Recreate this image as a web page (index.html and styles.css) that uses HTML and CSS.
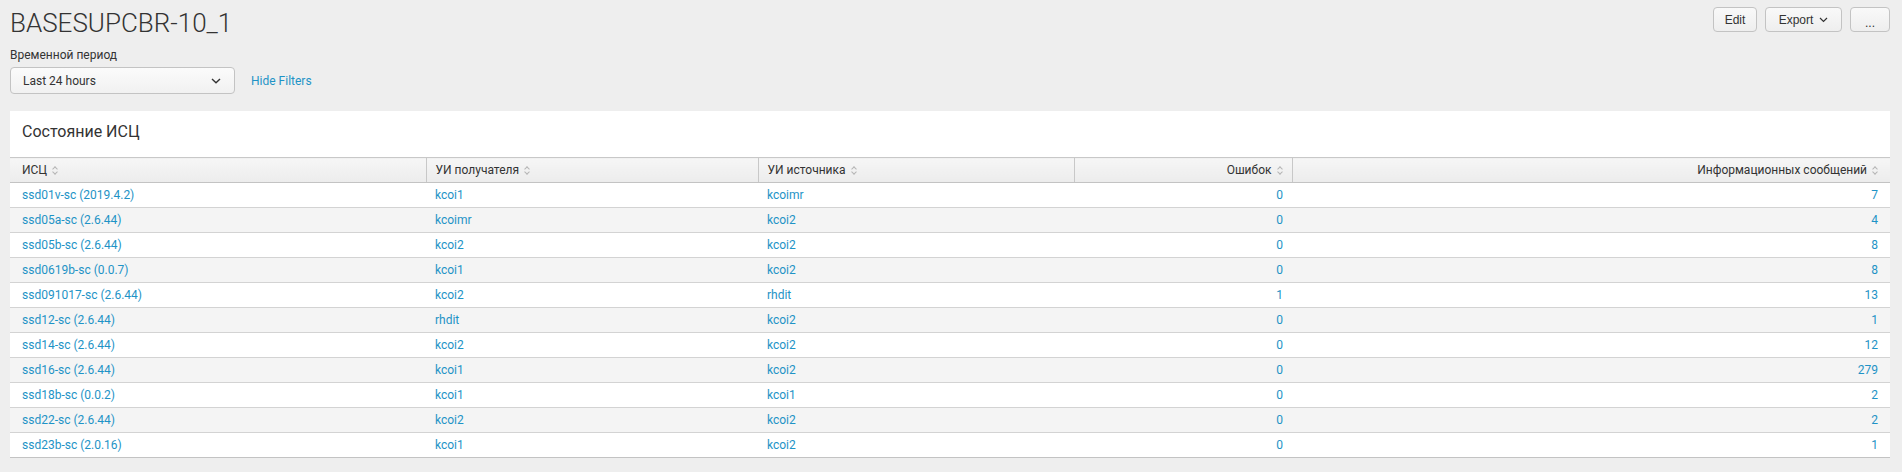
FILE: index.html
```html
<!DOCTYPE html>
<html lang="ru">
<head>
<meta charset="utf-8">
<title>BASESUPCBR-10_1</title>
<link rel="stylesheet" href="styles.css">
</head>
<body>
<header class="top">
  <h1 class="title">BASESUPCBR-10_1</h1>
  <div class="actions">
    <button class="btn btn-edit">Edit</button>
    <button class="btn btn-export">Export <svg class="chev" width="9" height="6" viewBox="0 0 9 6"><path d="M1 1l3.5 3.5L8 1" fill="none" stroke="#333" stroke-width="1.2"/></svg></button>
    <button class="btn btn-more">...</button>
  </div>
</header>
<section class="filters">
  <div class="label">Временной период</div>
  <div class="filter-row">
    <div class="select"><span>Last 24 hours</span><svg width="10" height="6" viewBox="0 0 10 6"><path d="M1 1l4 3.8L9 1" fill="none" stroke="#333" stroke-width="1.4"/></svg></div>
    <a class="hide-link">Hide Filters</a>
  </div>
</section>
<section class="panel">
  <h2 class="panel-title">Состояние ИСЦ</h2>
  <table class="grid">
    <colgroup><col class="c1"><col class="c2"><col class="c3"><col class="c4"><col></colgroup>
    <thead>
      <tr>
        <th>ИСЦ <i class="sort"></i></th>
        <th>УИ получателя <i class="sort"></i></th>
        <th>УИ источника <i class="sort"></i></th>
        <th class="num">Ошибок <i class="sort"></i></th>
        <th class="num">Информационных сообщений <i class="sort"></i></th>
      </tr>
    </thead>
    <tbody>
      <tr><td>ssd01v-sc (2019.4.2)</td><td>kcoi1</td><td>kcoimr</td><td class="num">0</td><td class="num">7</td></tr>
      <tr><td>ssd05a-sc (2.6.44)</td><td>kcoimr</td><td>kcoi2</td><td class="num">0</td><td class="num">4</td></tr>
      <tr><td>ssd05b-sc (2.6.44)</td><td>kcoi2</td><td>kcoi2</td><td class="num">0</td><td class="num">8</td></tr>
      <tr><td>ssd0619b-sc (0.0.7)</td><td>kcoi1</td><td>kcoi2</td><td class="num">0</td><td class="num">8</td></tr>
      <tr><td>ssd091017-sc (2.6.44)</td><td>kcoi2</td><td>rhdit</td><td class="num">1</td><td class="num">13</td></tr>
      <tr><td>ssd12-sc (2.6.44)</td><td>rhdit</td><td>kcoi2</td><td class="num">0</td><td class="num">1</td></tr>
      <tr><td>ssd14-sc (2.6.44)</td><td>kcoi2</td><td>kcoi2</td><td class="num">0</td><td class="num">12</td></tr>
      <tr><td>ssd16-sc (2.6.44)</td><td>kcoi1</td><td>kcoi2</td><td class="num">0</td><td class="num">279</td></tr>
      <tr><td>ssd18b-sc (0.0.2)</td><td>kcoi1</td><td>kcoi1</td><td class="num">0</td><td class="num">2</td></tr>
      <tr><td>ssd22-sc (2.6.44)</td><td>kcoi2</td><td>kcoi2</td><td class="num">0</td><td class="num">2</td></tr>
      <tr><td>ssd23b-sc (2.0.16)</td><td>kcoi1</td><td>kcoi2</td><td class="num">0</td><td class="num">1</td></tr>
    </tbody>
  </table>
</section>
</body>
</html>
```
FILE: styles.css
```css
html, body {
  margin: 0;
  background: #eeeeee;
}
body {
  padding: 0 12px 0 10px;
  font-family: Roboto, "Liberation Sans", Arial, sans-serif;
  color: #333;
  font-size: 12px;
}
.top {
  display: flex;
  justify-content: space-between;
  align-items: flex-start;
  padding-top: 7px;
}
.title {
  margin: 1px 0 0 0;
  font-size: 26px;
  line-height: 30px;
  font-weight: 300;
  color: #333;
}
.actions {
  display: flex;
  gap: 8px;
}
.btn {
  height: 25px;
  box-sizing: border-box;
  border: 1px solid #c3c3c3;
  border-radius: 4px;
  background: linear-gradient(#f9f9f9, #eeeeee);
  font-family: "Liberation Sans", Arial, sans-serif;
  font-size: 12px;
  color: #333;
  display: flex;
  align-items: center;
  justify-content: center;
  padding: 0 11px;
  margin: 0;
}
.btn-edit { width: 44px; }
.btn-export { width: 77px; padding: 0 12px; gap: 6px; }
.btn-more { width: 40px; align-items: flex-end; padding-bottom: 1px; line-height: 14px; }
.filters {
  padding-top: 9px;
}
.label {
  font-size: 12px;
  line-height: 16px;
  color: #333;
}
.filter-row {
  display: flex;
  align-items: center;
  margin-top: 4px;
  gap: 16px;
}
.select {
  width: 225px;
  height: 27px;
  box-sizing: border-box;
  border: 1px solid #c3c3c3;
  border-radius: 4px;
  background: linear-gradient(#fbfbfb, #f1f1f1);
  display: flex;
  align-items: center;
  justify-content: space-between;
  padding: 0 13px 0 12px;
  font-size: 12px;
  color: #333;
}
.hide-link {
  color: #1e93c6;
  font-size: 12px;
  cursor: pointer;
}
.panel {
  margin-top: 17px;
  background: #fff;
}
.panel-title {
  margin: 0;
  padding: 11px 12px 15px;
  font-size: 16px;
  line-height: 20px;
  font-weight: 400;
  color: #333;
}
.grid {
  width: 100%;
  border-collapse: collapse;
  table-layout: fixed;
  font-size: 12px;
}
.c1 { width: 416px; }
.c2 { width: 332px; }
.c3 { width: 316px; }
.c4 { width: 218px; }
.grid th {
  text-align: left;
  font-weight: 400;
  color: #333;
  background: linear-gradient(#f6f6f6, #ececec);
  border-top: 1px solid #c8c8c8;
  border-bottom: 1px solid #c3c3c3;
  border-left: 1px solid #c8c8c8;
  padding: 4px 9px;
  line-height: 16px;
  white-space: nowrap;
}
.grid th:first-child { border-left: none; }
.grid td {
  padding: 4px 9px;
  line-height: 16px;
  color: #1e93c6;
  border-bottom: 1px solid #d3d3d3;
  white-space: nowrap;
}
.grid td:first-child, .grid th:first-child { padding-left: 12px; }
.grid td:last-child, .grid th:last-child { padding-right: 12px; }
.grid tbody tr:nth-child(even) td { background: #f4f4f4; }
.grid tbody tr:last-child td { border-bottom-color: #c3c3c3; }
.grid .num { text-align: right; }
.sort {
  display: inline-block;
  width: 6px;
  height: 9px;
  margin-left: 2px;
  vertical-align: -1px;
  position: relative;
}
.sort::before, .sort::after {
  content: "";
  position: absolute;
  left: 1px;
  width: 3px;
  height: 3px;
  border-left: 1px solid #b5b5b5;
  border-top: 1px solid #b5b5b5;
}
.sort::before { top: 1px; transform: rotate(45deg); }
.sort::after { bottom: 1px; transform: rotate(-135deg); }
```
